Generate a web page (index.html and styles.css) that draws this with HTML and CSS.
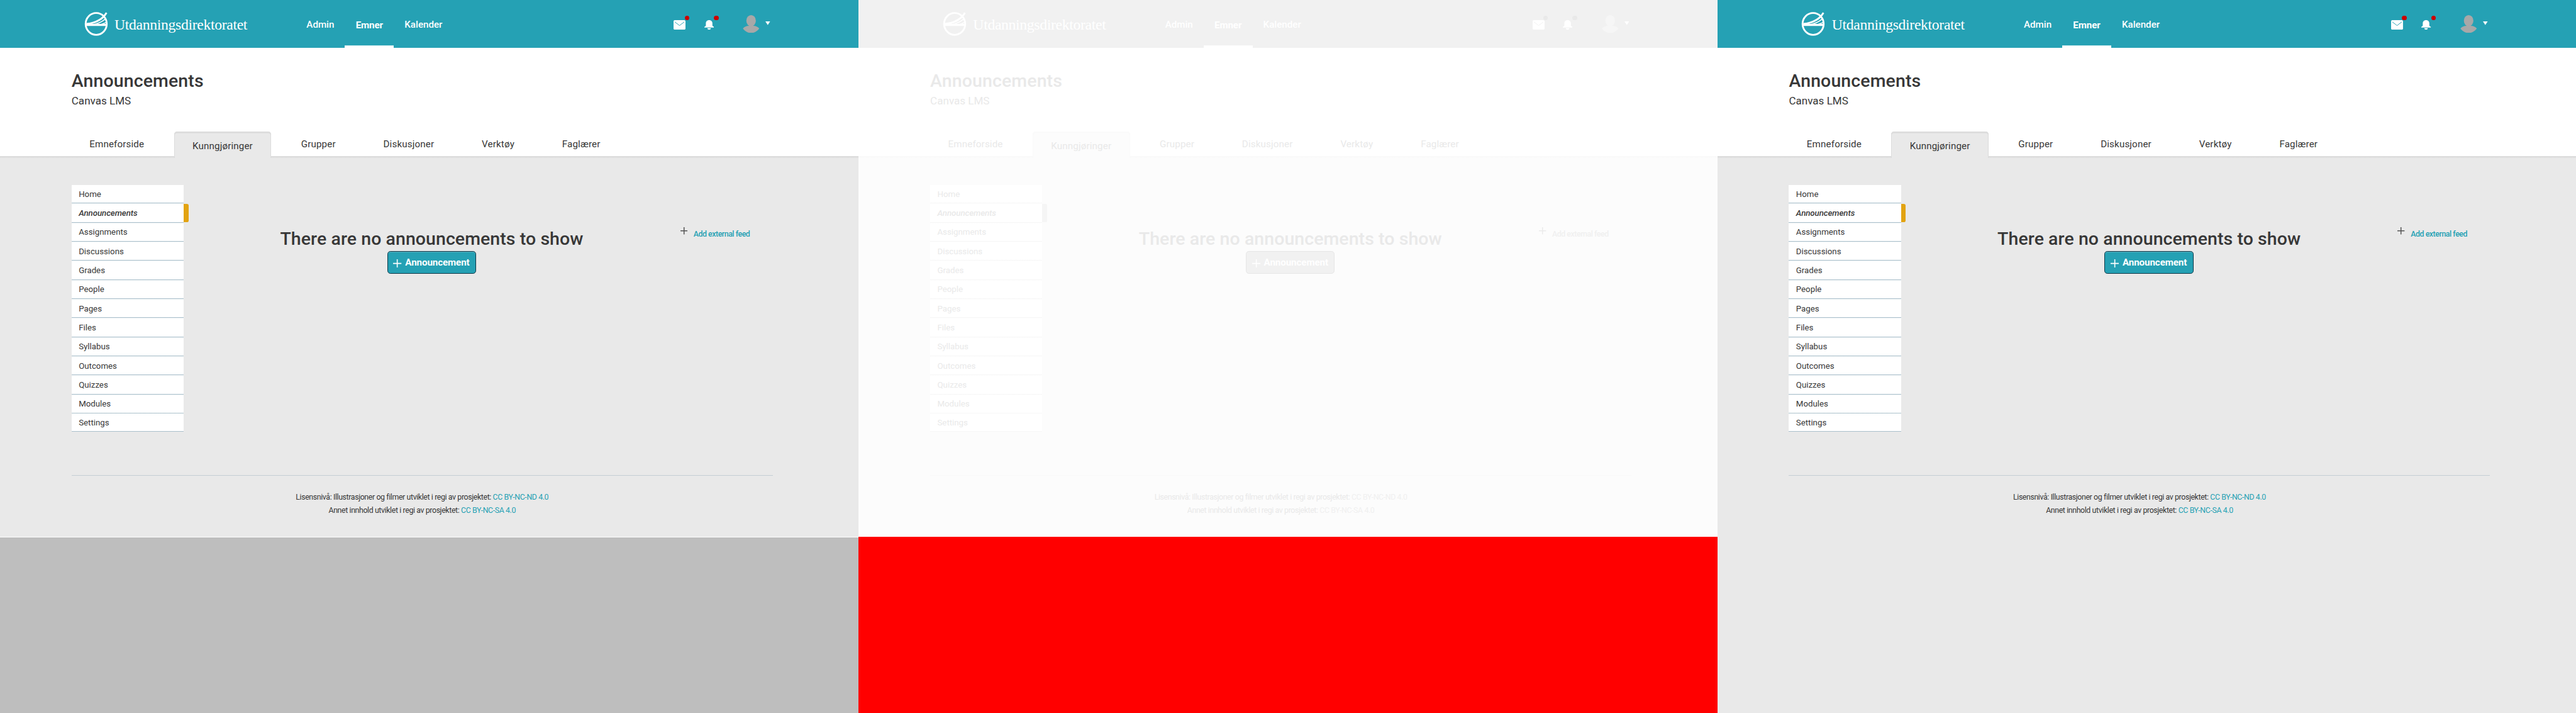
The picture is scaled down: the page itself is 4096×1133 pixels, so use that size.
FILE: index.html
```
<!DOCTYPE html>
<html lang="nb">
<head>
<meta charset="utf-8">
<title>Announcements</title>
<link rel="stylesheet" href="styles.css">
</head>
<body>
<template id="screen">
  <header class="topbar">
    <svg class="logo" viewBox="0 0 40 40"><ellipse cx="20" cy="20" rx="17.7" ry="18.3" fill="none" stroke="currentColor" stroke-width="3"/><path d="M36 .4 38.600 2.200C33 12.500 20 21 3.500 21V18.500C18 17 30 11 36 .4Z" fill="currentColor"/><path d="M35 12C29 17 22 20 15 21M37 17C33 20 28 21 24 21.500" fill="none" stroke="currentColor" stroke-width="1.600"/><path d="M2 20H37V23.600H2Z" fill="currentColor"/></svg>
    <span class="brand">Utdanningsdirektoratet</span>
    <nav class="mainnav"><a>Admin</a><a class="current">Emner</a><a>Kalender</a></nav>
    <div class="tools">
      <span class="tool mail"><svg viewBox="0 0 20 16"><rect width="20" height="16" rx="2" fill="currentColor"/><path class="fold" d="M2 3 10 9 18 3"/></svg></span>
      <span class="tool bell"><svg viewBox="0 0 16 16"><path d="M8 0C11.500 0 13.500 2.300 13.500 5.500V9.500L16 11.300V12.300H0V11.300L2.500 9.500V5.500C2.500 2.300 4.500 0 8 0ZM5 13.500H11C10.800 15 9.500 16 8 16S5.200 15 5 13.500Z" fill="currentColor"/></svg></span>
      <svg class="avatar" viewBox="0 0 28 30"><ellipse cx="14" cy="9.400" rx="8" ry="9.400"/><path d="M.3 22.500C2.500 19.500 6 18.200 10.500 18L11 16H17L17.500 18C22 18.200 25.500 19.500 27.700 22.500C24 27.500 19.500 30 14 30S4 27.500 .3 22.500Z"/></svg>
      <svg class="caret" viewBox="0 0 8 6"><path d="M0 0H8L4 6Z" fill="currentColor"/></svg>
    </div>
  </header>
  <section class="heading">
    <h1>Announcements</h1>
    <p>Canvas LMS</p>
    <nav class="tabs"><a>Emneforside</a><a class="active">Kunngjøringer</a><a>Grupper</a><a>Diskusjoner</a><a>Verktøy</a><a>Faglærer</a></nav>
  </section>
  <main class="content">
    <ul class="menu"><li>Home</li><li class="selected">Announcements</li><li>Assignments</li><li>Discussions</li><li>Grades</li><li>People</li><li>Pages</li><li>Files</li><li>Syllabus</li><li>Outcomes</li><li>Quizzes</li><li>Modules</li><li>Settings</li></ul>
    <div class="empty">
      <h2>There are no announcements to show</h2>
      <button class="add"><svg viewBox="0 0 14 14"><path d="M7 0V14M0 7H14" stroke="currentColor" stroke-width="1.700"/></svg><span>Announcement</span></button>
    </div>
    <div class="feed"><svg viewBox="0 0 12 12"><path d="M6 0V12M0 6H12" stroke="currentColor" stroke-width="1.600"/></svg><a>Add external feed</a></div>
  </main>
  <footer class="license">
    <p>Lisensnivå: Illustrasjoner og filmer utviklet i regi av prosjektet: <a>CC BY-NC-ND 4.0</a></p>
    <p>Annet innhold utviklet i regi av prosjektet: <a>CC BY-NC-SA 4.0</a></p>
  </footer>
</template>
<div class="board">
  <article class="panel before"></article>
  <article class="panel diff"></article>
  <article class="panel after"></article>
</div>
<script src="panels.js"></script>
</body>
</html>
```
FILE: panels.js
```
const screenTemplate = document.getElementById('screen');
document.querySelectorAll('.panel').forEach((panel) => {
  const view = document.createElement('div');
  view.className = 'screen';
  view.append(screenTemplate.content.cloneNode(true));
  panel.append(view);
});
```
FILE: styles.css
```
* { box-sizing: border-box; margin: 0; padding: 0; }
html, body { overflow: hidden; }
body { background: #fff; font-family: Roboto, "Liberation Sans", sans-serif; }

.board { display: flex; width: 4320px; height: 1195px; zoom: 0.948148; }

.panel {
  --bar: #25a1b4;
  --page: #e9e9e9;
  --edge: #dcdcdc;
  --ink: #373737;
  --link: #25a1b4;
  --rule: #a6bdc9;
  --rule-soft: #edf2f4;
  --mark: #e2a312;
  --dot: #cc0000;
  --avatar: #a8a8a8;
  --button-edge: #0b3545;
  --button-shine: #5eb4c3;
  --divider: #c4ced5;
  --cross: #555;
  width: 1440px;
  color: var(--ink);
  background: var(--page);
}
.before { background: #bebebe; }
.diff {
  --bar: #f1f1f1;
  --page: #fcfcfc;
  --edge: #fafafa;
  --ink: #e9e9e9;
  --link: #f0f0f0;
  --rule: #f6f6f6;
  --rule-soft: #fdfdfd;
  --mark: #f5f5f5;
  --dot: #e9e9e9;
  --avatar: #f6f6f6;
  --button-edge: #e6e6e6;
  --button-shine: #f1f1f1;
  --divider: #f8f8f8;
  --cross: #ebebeb;
  background: #f00;
}

.screen { height: 900px; background: var(--page); }
.before .screen { height: 901px; border-bottom: 1px solid #fff; }

.topbar { display: flex; height: 80px; padding-left: 141px; background: var(--bar); color: #fff; }
.logo { width: 40px; height: 40px; margin-top: 20px; }
.brand { width: 315px; padding: 25px 0 0 11px; font: 25px/32px "Liberation Serif", serif; letter-spacing: -0.35px; white-space: nowrap; }
.mainnav { display: flex; font-size: 16px; font-weight: 500; line-height: 20px; }
.mainnav a { padding: 32px 18px 0; }
.mainnav .current { width: 82px; padding: 33px 0 0; text-align: center; font-weight: 700; letter-spacing: -0.1px; box-shadow: inset 0 -4px #fff; }
.tools { display: flex; margin-left: auto; padding-right: 148px; }
.tool { position: relative; height: 16px; margin-top: 34px; }
.tool svg { display: block; height: 16px; }
.mail { width: 20px; margin-right: 31px; }
.bell { width: 16px; margin-right: 49px; }
.tool::after { content: ""; position: absolute; top: -8px; width: 8px; height: 8px; border-radius: 50%; background: var(--dot); }
.mail::after { left: 18px; }
.bell::after { left: 16px; }
.fold { fill: none; stroke: var(--bar); stroke-width: 1; }
.avatar { width: 28px; height: 30px; margin: 25px 10px 0 0; fill: var(--avatar); }
.caret { width: 8px; height: 6px; margin-top: 36px; }

.heading { display: flex; flex-direction: column; height: 185px; padding: 39px 0 0 120px; background: linear-gradient(var(--edge), var(--edge)) bottom / 100% 3px no-repeat #fff; }
h1, h2 { font-size: 30px; font-weight: 500; line-height: 34px; }
h1 { letter-spacing: 0.15px; }
h2 { letter-spacing: 0.1px; }
.heading p { margin-top: 5px; font-size: 18px; line-height: 22px; }
.tabs { display: flex; gap: 20px; height: 45px; margin-top: auto; font-size: 16px; line-height: 20px; letter-spacing: 0.15px; }
.tabs a { padding: 12px 30px 0; }
.tabs .active { padding: 15px 31px 0; border-radius: 5px 5px 0 0; background: var(--page); box-shadow: inset 0 3px var(--edge), inset 1px 0 var(--edge), inset -1px 0 var(--edge); }

.content { display: flex; height: 531px; padding: 45px 0 0 120px; }
.menu { width: 188px; list-style: none; font-size: 14px; line-height: 20px; }
.menu li { display: flex; height: 32px; padding: 6px 12px 0; background: linear-gradient(var(--rule), var(--rule)) 0 30px / 100% 1px no-repeat, linear-gradient(var(--rule-soft), var(--rule-soft)) bottom / 100% 1px no-repeat #fff; }
.menu li:nth-last-child(-n+2) { height: 31px; }
.menu .selected { font-style: italic; font-weight: 500; letter-spacing: -0.06px; }
.menu .selected::after { content: ""; width: 8px; height: 30px; margin: -6px -20px 0 auto; border-radius: 0 3px 3px 0; background: var(--mark); }
.empty { display: flex; flex-direction: column; align-items: center; width: 832px; padding-top: 74px; }
.empty h2 { height: 37px; }
.add { display: flex; align-items: center; width: 149px; height: 38px; padding-left: 9px; gap: 6px; border: 1px solid var(--button-edge); border-radius: 5px; background: var(--bar); box-shadow: inset 0 1px var(--button-shine); color: #fff; font: 700 16px/20px Roboto, sans-serif; letter-spacing: -0.1px; }
.add svg { width: 14px; height: 14px; margin-top: 3px; }
.feed { display: flex; gap: 10px; padding-top: 71px; padding-left: 1px; font-size: 13px; line-height: 16px; font-weight: 500; letter-spacing: -0.45px; }
.feed svg { width: 12px; height: 12px; color: var(--cross); }
.feed a { margin-top: 4px; white-space: nowrap; }
.feed a, .license a { color: var(--link); }

.license { width: 1176px; margin-left: 120px; padding-top: 26px; border-top: 1px solid var(--divider); text-align: center; font-size: 13px; line-height: 22px; letter-spacing: -0.39px; }
```
